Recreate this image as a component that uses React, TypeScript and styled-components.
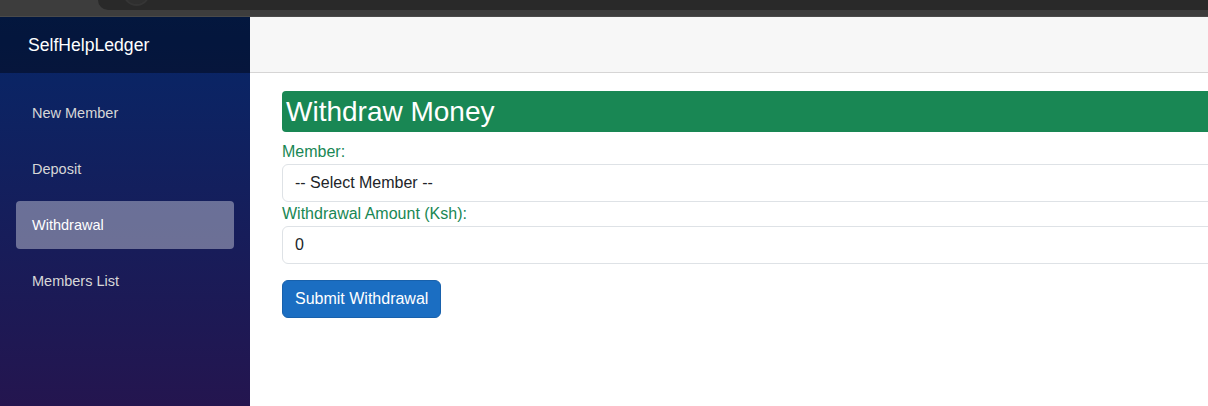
import React from "react";
import styled, { createGlobalStyle } from "styled-components";

const Global = createGlobalStyle`
  html, body { margin: 0; padding: 0; overflow: hidden; background: #fff; }
  body { font-family: "Liberation Sans", Arial, Helvetica, sans-serif; font-size: 16px; }
  * { box-sizing: border-box; }
`;

const Page = styled.div`
  width: 1208px;
  height: 406px;
  display: flex;
  flex-direction: column;
  overflow: hidden;
`;

const Chrome = styled.div`
  height: 17px;
  flex: none;
  background: #3d3d3d;
  display: flex;
  align-items: flex-start;
  padding-left: 98px;
  border-bottom: 1px solid #4a4a4a;
`;

const UrlBar = styled.div`
  position: relative;
  flex: 1;
  height: 10px;
  background: #292929;
  border-bottom-left-radius: 10px;
`;

const UrlIcon = styled.div`
  position: absolute;
  left: 25px;
  top: -21px;
  width: 27px;
  height: 27px;
  border-radius: 50%;
  background: #2f2f2f;
  border: 2px solid #353535;
`;

const Layout = styled.div`
  flex: 1;
  display: flex;
  min-height: 0;
`;

const Sidebar = styled.aside`
  width: 250px;
  flex: none;
  display: flex;
  flex-direction: column;
  background: linear-gradient(180deg, #062768 0%, #24154f 100%);
`;

const Brand = styled.div`
  height: 56px;
  flex: none;
  display: flex;
  align-items: center;
  padding-left: 28px;
  background: rgba(0, 0, 0, 0.4);
  color: #fff;
  font-size: 17.6px;
`;

const NavList = styled.nav`
  display: flex;
  flex-direction: column;
  padding: 16px 16px 0;
  gap: 8px;
`;

const NavLink = styled.a<{ $active?: boolean }>`
  display: flex;
  align-items: center;
  height: 48px;
  padding-left: 16px;
  border-radius: 4px;
  font-size: 14.5px;
  text-decoration: none;
  color: ${(p) => (p.$active ? "#ffffff" : "#d7d7d7")};
  background: ${(p) => (p.$active ? "rgba(255, 255, 255, 0.37)" : "transparent")};
`;

const Main = styled.main`
  flex: 1;
  min-width: 0;
  display: flex;
  flex-direction: column;
`;

const TopRow = styled.div`
  height: 56px;
  flex: none;
  background: #f7f7f7;
  border-bottom: 1px solid #d6d5d5;
`;

const Content = styled.div`
  padding: 18px 0 0 32px;
  width: 1400px;
  display: flex;
  flex-direction: column;
`;

const Heading = styled.h3`
  margin: 0 0 8px;
  height: 41px;
  display: flex;
  align-items: center;
  padding: 0 4px;
  background: #198754;
  color: #fff;
  font-size: 28px;
  font-weight: 400;
  border-radius: 4px;
`;

const Label = styled.label`
  display: block;
  color: #198754;
  font-size: 16px;
  line-height: 24px;
`;

const Field = styled.div`
  height: 38px;
  display: flex;
  align-items: center;
  padding: 0 12px;
  border: 1px solid #dee2e6;
  border-radius: 6px;
  color: #212529;
  font-size: 16px;
  background: #fff;
`;

const Button = styled.button`
  align-self: flex-start;
  margin-top: 16px;
  height: 38px;
  padding: 0 12px;
  background: #1b6ec2;
  border: 1px solid #1861ac;
  border-radius: 6px;
  color: #fff;
  font-family: inherit;
  font-size: 16px;
`;

export default function App() {
  return (
    <Page>
      <Global />
      <Chrome>
        <UrlBar>
          <UrlIcon />
        </UrlBar>
      </Chrome>
      <Layout>
        <Sidebar>
          <Brand>SelfHelpLedger</Brand>
          <NavList>
            <NavLink>New Member</NavLink>
            <NavLink>Deposit</NavLink>
            <NavLink $active>Withdrawal</NavLink>
            <NavLink>Members List</NavLink>
          </NavList>
        </Sidebar>
        <Main>
          <TopRow />
          <Content>
            <Heading>Withdraw Money</Heading>
            <Label>Member:</Label>
            <Field>-- Select Member --</Field>
            <Label>Withdrawal Amount (Ksh):</Label>
            <Field>0</Field>
            <Button>Submit Withdrawal</Button>
          </Content>
        </Main>
      </Layout>
    </Page>
  );
}
